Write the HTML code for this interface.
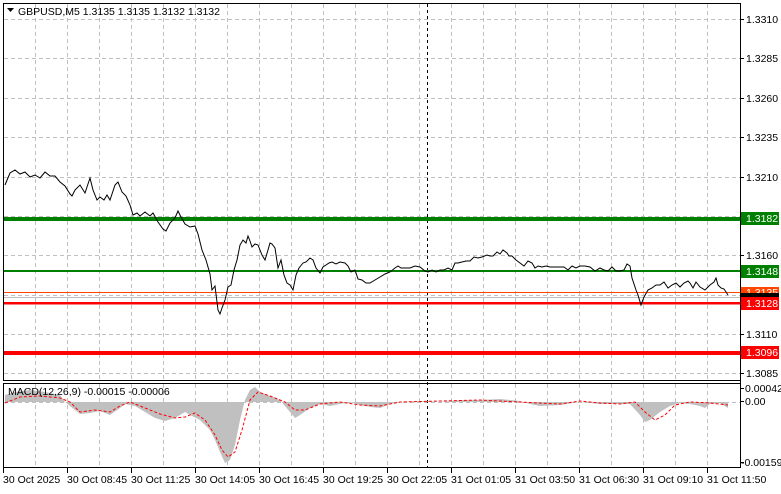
<!DOCTYPE html>
<html><head><style>
body{margin:0;background:#fff;width:781px;height:489px;overflow:hidden}
svg text{font-family:"Liberation Sans",sans-serif;font-size:10.5px}
</style></head><body>
<svg width="781" height="489" viewBox="0 0 781 489" xmlns="http://www.w3.org/2000/svg">
<rect width="781" height="489" fill="#fff"/>
<g stroke="#c0c0c0" stroke-dasharray="4,3" stroke-width="1">
<path d="M35.5 4V380M67.5 4V380M99.5 4V380M131.5 4V380M163.5 4V380M195.5 4V380M227.5 4V380M259.5 4V380M291.5 4V380M323.5 4V380M355.5 4V380M387.5 4V380M419.5 4V380M451.5 4V380M483.5 4V380M515.5 4V380M547.5 4V380M579.5 4V380M611.5 4V380M643.5 4V380M675.5 4V380M707.5 4V380"/>
<path d="M4 19.5H740M4 58.5H740M4 98.5H740M4 137.5H740M4 177.5H740M4 216.5H740M4 255.5H740M4 295.5H740M4 334.5H740M4 373.5H740"/>
<path d="M35.5 384V467M67.5 384V467M99.5 384V467M131.5 384V467M163.5 384V467M195.5 384V467M227.5 384V467M259.5 384V467M291.5 384V467M323.5 384V467M355.5 384V467M387.5 384V467M419.5 384V467M451.5 384V467M483.5 384V467M515.5 384V467M547.5 384V467M579.5 384V467M611.5 384V467M643.5 384V467M675.5 384V467M707.5 384V467"/>
<path d="M4 402.5H740"/>
</g>
<path d="M427.5 4V467" stroke="#000" stroke-dasharray="3,3"/>
<rect x="3" y="217" width="738" height="4" fill="#008000"/>
<rect x="3" y="270" width="738" height="2" fill="#008000"/>
<rect x="3" y="292" width="738" height="1" fill="#ff4500"/>
<rect x="3" y="297" width="738" height="1" fill="#c0c0c0"/>
<rect x="3" y="302" width="738" height="2.5" fill="#ff0000"/>
<rect x="3" y="351" width="738" height="4" fill="#ff0000"/>
<polyline fill="none" stroke="#000" stroke-width="1" points="5,185 10,173 15,170 20,174 25,172 30,177 35,175 40,178 45,172 50,176 55,176 60,182 65,186 70,194 72,196 75,190 80,185 85,193 90,178 93,190 97,200 100,197 104,200 107,195 110,200 115,185 118,182 122,192 126,196 130,205 133,215 137,213 140,216 145,212 150,216 153,213 158,222 163,229 166,231 170,223 175,218 178,211 181,217 185,224 190,227 195,226 198,234 202,250 206,260 210,274 212,290 215,286 218,310 220,314 222,308 225,300 228,287 231,285 234,270 237,260 240,245 243,240 246,243 248,236 250,241 252,247 255,244 258,245 262,255 265,260 268,250 270,243 272,244 275,248 278,268 281,260 284,275 287,283 290,285 293,290 296,275 299,268 303,263 306,262 310,258 313,260 316,268 320,273 323,267 326,265 329,263 332,262 336,264 340,262 345,263 348,266 351,272 355,270 358,279 362,280 366,283 370,283 375,280 380,277 385,274 390,272 395,268 398,266 401,268 405,268 410,268 415,266 420,267 425,271 428,272 432,270 436,272 440,270 444,270 448,268 452,270 455,263 458,263 462,262 466,261 470,261 474,257 478,258 482,257 487,255 490,256 493,256 497,252 500,254 503,250 507,253 509,256 512,256 516,260 520,263 524,266 528,261 532,263 535,268 538,266 542,267 546,266 550,267 555,267 560,267 564,267 568,270 572,266 576,268 580,266 585,266 590,267 595,271 600,268 604,270 608,271 612,267 616,271 620,271 624,270 627,264 630,266 632,278 636,290 638,295 641,305 644,297 648,290 652,288 656,285 660,285 664,282 668,288 672,285 676,283 680,287 684,283 688,281 690,283 693,288 696,282 700,287 705,290 710,285 714,282 716,278 718,285 721,288 724,289 728,295"/>
<polygon fill="#c0c0c0" points="5,402 5,395 15,392 30,390 45,392 60,395 65,402 75,410 80,414 90,413 100,411 110,415 120,408 125,404 135,406 145,412 155,418 165,421 175,418 185,412 190,415 200,420 210,430 215,440 220,452 225,463 230,460 235,445 240,420 245,400 250,390 255,387 260,392 270,396 280,400 290,412 295,418 300,415 310,408 320,404 330,406 340,404 350,402 360,405 370,407 380,408 390,404 400,402 420,401 440,402 460,400 480,400 500,399 520,401 530,404 540,406 560,405 580,402 600,404 620,404 630,404 640,415 645,422 650,420 660,412 670,406 680,403 690,404 700,406 705,408 710,404 720,403 728,408 728,402"/>
<polyline fill="none" stroke="#ff0000" stroke-dasharray="3,2" stroke-width="1" points="5,403 20,397 40,396 60,398 70,402 80,412 95,410 110,412 120,406 130,402 145,408 160,414 175,418 185,417 195,413 205,420 215,435 222,450 228,457 235,452 242,430 250,400 258,392 270,396 285,402 295,410 305,410 320,404 340,402 360,405 380,406 400,402 440,401 480,400 520,402 560,404 580,401 600,403 620,404 635,402 645,412 655,420 665,415 675,405 690,402 710,403 728,405"/>
<g fill="none" stroke="#000">
<rect x="3.5" y="3.5" width="737" height="377"/>
<rect x="3.5" y="383.5" width="737" height="84"/>
<path d="M740.5 3V468M3.5 468V473M67.5 468V473M131.5 468V473M195.5 468V473M259.5 468V473M323.5 468V473M387.5 468V473M451.5 468V473M515.5 468V473M579.5 468V473M643.5 468V473M707.5 468V473"/>
<path d="M740 19.5h4M740 58.5h4M740 98.5h4M740 137.5h4M740 177.5h4M740 255.5h4M740 334.5h4M740 373.5h4M740 388.5h4M740 401.5h4M740 462.5h4"/>
</g>
<path d="M7 8h7l-3.5 4z" fill="#000"/>
<text x="18" y="15">GBPUSD,M5  1.3135 1.3135 1.3132 1.3132</text>
<text x="8" y="395">MACD(12,26,9) -0.00015 -0.00006</text>
<g fill="#000">
<text x="746" y="23">1.3310</text><text x="746" y="62">1.3285</text><text x="746" y="102">1.3260</text><text x="746" y="141">1.3235</text><text x="746" y="181">1.3210</text><text x="746" y="259">1.3160</text><text x="746" y="338">1.3110</text><text x="746" y="377">1.3085</text>
<text x="745" y="392">0.00042</text><text x="745" y="405">0.00</text><text x="741" y="466">-0.00159</text>
</g>
<rect x="741" y="212" width="38" height="13" fill="#008000"/><text x="746" y="222" fill="#fff">1.3182</text>
<rect x="741" y="265" width="38" height="13" fill="#008000"/><text x="746" y="275" fill="#fff">1.3148</text>
<rect x="741" y="287" width="38" height="8" fill="#ff4500"/><text x="746" y="296" fill="#fff">1.3135</text>
<rect x="741" y="293" width="38" height="4" fill="#000"/>
<rect x="741" y="297" width="38" height="13" fill="#ff0000"/><text x="746" y="307" fill="#fff">1.3128</text>
<rect x="741" y="346" width="38" height="13" fill="#ff0000"/><text x="746" y="356" fill="#fff">1.3096</text>
<g fill="#000">
<text x="3" y="483">30 Oct 2025</text><text x="67" y="483">30 Oct 08:45</text><text x="131" y="483">30 Oct 11:25</text><text x="195" y="483">30 Oct 14:05</text><text x="259" y="483">30 Oct 16:45</text><text x="323" y="483">30 Oct 19:25</text><text x="387" y="483">30 Oct 22:05</text><text x="451" y="483">31 Oct 01:05</text><text x="515" y="483">31 Oct 03:50</text><text x="579" y="483">31 Oct 06:30</text><text x="643" y="483">31 Oct 09:10</text><text x="707" y="483">31 Oct 11:50</text>
</g>
</svg>
</body></html>
